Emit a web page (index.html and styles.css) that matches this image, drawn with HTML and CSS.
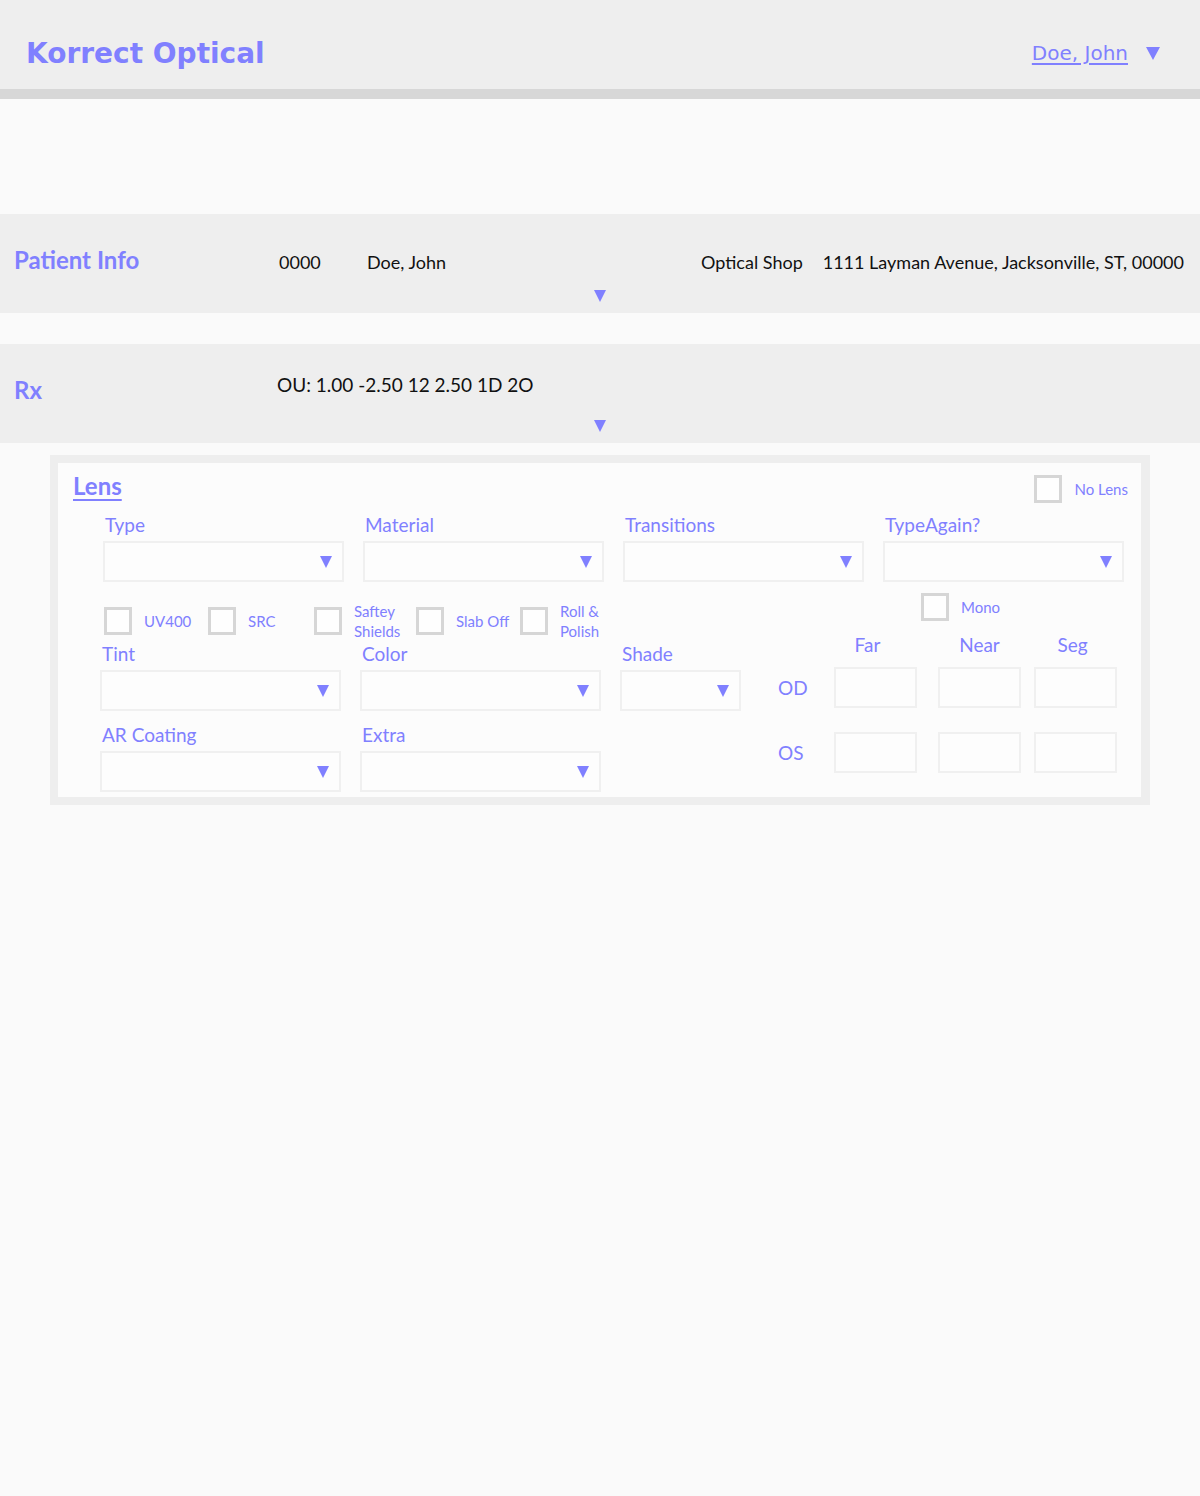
FILE: index.html
```html
<!DOCTYPE html>
<html>
<head>
<meta charset="utf-8">
<title>Korrect Optical</title>
<link rel="stylesheet" href="styles.css">
</head>
<body>
<header class="topbar">
  <h1 class="brand">Korrect Optical</h1>
  <div class="user"><a href="#" class="user-link">Doe, John</a><span class="tri tri-lg"></span></div>
</header>
<div class="spacer"></div>
<section class="band band-patient">
  <div class="band-row">
    <h2 class="band-title">Patient Info</h2>
    <span class="pid">0000</span>
    <span class="pname">Doe, John</span>
    <span class="shop">Optical Shop</span>
    <span class="addr">1111 Layman Avenue, Jacksonville, ST, 00000</span>
  </div>
  <div class="band-toggle"><span class="tri"></span></div>
</section>
<section class="band band-rx">
  <div class="band-row">
    <h2 class="band-title rx-title">Rx</h2>
    <span class="rx-val">OU: 1.00 -2.50 12 2.50 1D 2O</span>
  </div>
  <div class="band-toggle"><span class="tri"></span></div>
</section>
<div class="lens-box">
  <div class="lens-inner">
    <div class="lens-head">
      <a href="#" class="lens-title">Lens</a>
      <label class="chk chk-nolens"><span class="box"></span><span class="chk-label">No Lens</span></label>
    </div>
    <div class="row4">
      <div class="field"><div class="flabel">Type</div><div class="select"><span class="tri"></span></div></div>
      <div class="field"><div class="flabel">Material</div><div class="select"><span class="tri"></span></div></div>
      <div class="field"><div class="flabel">Transitions</div><div class="select"><span class="tri"></span></div></div>
      <div class="field"><div class="flabel">TypeAgain?</div><div class="select"><span class="tri"></span></div></div>
    </div>
    <div class="lower">
      <div class="lower-left">
        <div class="chk-row">
          <label class="chk"><span class="box"></span><span class="chk-label w-uv">UV400</span></label>
          <label class="chk"><span class="box"></span><span class="chk-label w-src">SRC</span></label>
          <label class="chk"><span class="box"></span><span class="chk-label two w-saf">Saftey<br>Shields</span></label>
          <label class="chk"><span class="box"></span><span class="chk-label w-slab">Slab Off</span></label>
          <label class="chk"><span class="box"></span><span class="chk-label two">Roll &amp;<br>Polish</span></label>
        </div>
        <div class="row3">
          <div class="field"><div class="flabel">Tint</div><div class="select"><span class="tri"></span></div></div>
          <div class="field f-color"><div class="flabel">Color</div><div class="select"><span class="tri"></span></div></div>
          <div class="field f-shade"><div class="flabel">Shade</div><div class="select select-sm"><span class="tri"></span></div></div>
        </div>
        <div class="row2">
          <div class="field"><div class="flabel">AR Coating</div><div class="select"><span class="tri"></span></div></div>
          <div class="field"><div class="flabel">Extra</div><div class="select"><span class="tri"></span></div></div>
        </div>
      </div>
      <div class="lower-right">
        <label class="chk chk-mono"><span class="box"></span><span class="chk-label">Mono</span></label>
        <div class="eye-grid">
          <span></span><span class="colh colh-far">Far</span><span class="colh">Near</span><span class="colh colh-seg">Seg</span>
          <span class="eye">OD</span><span class="inp"></span><span class="inp"></span><span class="inp inp-last"></span>
          <span class="eye os">OS</span><span class="inp os"></span><span class="inp os"></span><span class="inp os inp-last"></span>
        </div>
      </div>
    </div>
  </div>
</div>
</body>
</html>
```

FILE: styles.css
```css
* { box-sizing: border-box; }
html, body { margin: 0; padding: 0; }
body {
  background: #fafafa;
  font-family: Lato, "Open Sans", sans-serif;
  color: #8080ff;
  width: 1200px;
  height: 1496px;
}
a { color: #8080ff; }

.tri {
  display: inline-block;
  width: 0; height: 0;
  border-left: 6px solid transparent;
  border-right: 6px solid transparent;
  border-top: 12px solid #8080ff;
}
.tri-lg {
  border-left-width: 7px;
  border-right-width: 7px;
  border-top-width: 13px;
}

.topbar {
  height: 99px;
  background: #eeeeee;
  border-bottom: 10px solid #d7d7d7;
  display: flex;
  align-items: center;
  justify-content: space-between;
  padding: 17px 40px 0 26px;
}
.brand {
  margin: 0;
  font-family: "DejaVu Sans", Verdana, sans-serif;
  font-weight: bold;
  font-size: 28px;
  color: #8080ff;
}
.user { display: flex; align-items: center; gap: 18px; }
.user-link {
  font-family: "DejaVu Sans", Verdana, sans-serif;
  font-size: 20px;
  text-underline-offset: 3px;
}

.spacer { height: 115px; }

.band {
  height: 99px;
  background: #eeeeee;
  display: flex;
  flex-direction: column;
}
.band-rx { margin-top: 31px; }
.band-row {
  display: flex;
  align-items: center;
  height: 76px;
  padding: 0 16px 0 14px;
  color: #111;
  font-size: 18px;
}
.band-patient .band-row { padding-top: 20px; }
.band-title {
  margin: 0;
  font-size: 24px;
  font-weight: bold;
  color: #8080ff;
  width: 265px;
  position: relative;
  top: -3px;
}
.rx-title { top: 7px; width: 263px; }
.pid { width: 88px; }
.pname { flex: 1; }
.shop { margin-right: 20px; }
.rx-val { position: relative; top: 2px; font-size: 19px; }
.band-toggle {
  display: flex;
  justify-content: center;
}

.lens-box {
  margin: 12px 50px 0;
  border: 8px solid #eeeeee;
  border-right-width: 9px;
  background: #fcfcfc;
}
.lens-inner {
  height: 334px;
  padding: 8px 13px 0 15px;
}
.lens-head {
  display: flex;
  justify-content: space-between;
  align-items: flex-start;
  height: 42px;
}
.lens-title {
  font-size: 24px;
  font-weight: bold;
  text-underline-offset: 4px;
  margin-top: 0;
}
.chk {
  display: flex;
  align-items: center;
  gap: 12px;
}
.box {
  display: inline-block;
  width: 28px; height: 28px;
  border: 3px solid #d6d6d6;
  background: #fefefe;
  flex: none;
}
.chk-label { font-size: 15px; line-height: 20px; color: #8080ff; }
.chk-nolens { margin-top: 4px; }

.row4 {
  display: flex;
  gap: 19px;
  padding-left: 30px;
}
.field { width: 241px; }
.flabel {
  font-size: 19px;
  line-height: 24px;
  padding-left: 2px;
  margin-bottom: 4px;
}
.select {
  height: 41px;
  border: 2px solid #f0f0f0;
  background: #fdfdfd;
  display: flex;
  align-items: center;
  justify-content: flex-end;
  padding-right: 10px;
}
.select-sm { width: 121px; }

.lower {
  display: flex;
  padding-left: 27px;
}
.lower-left { width: 650px; }
.chk-row {
  display: flex;
  align-items: center;
  height: 60px;
  padding-top: 18px;
  padding-left: 4px;
}
.w-uv { width: 64px; }
.w-src { width: 66px; }
.w-saf { width: 62px; }
.w-slab { width: 64px; }
.two { line-height: 20px; font-size: 15px; }

.row3 {
  display: flex;
  gap: 19px;
}
.f-shade { width: 121px; }
.row2 {
  display: flex;
  gap: 19px;
  margin-top: 12px;
}

.lower-right {
  padding-left: 28px;
}
.chk-mono { margin-left: 143px; margin-top: 11px; }
.eye-grid {
  display: grid;
  grid-template-columns: 35px 83px 83px 83px;
  column-gap: 21px;
  margin-top: 12px;
  align-items: center;
}
.eye-grid .colh {
  text-align: center;
  font-size: 19px;
  line-height: 24px;
  height: 34px;
  align-self: start;
}
.colh-far { padding-right: 16px; }
.colh-seg { padding-right: 14px; }
.eye { font-size: 19px; }
.inp {
  width: 83px;
  height: 41px;
  border: 2px solid #f0f0f0;
  background: #fdfdfd;
}
.inp-last, .colh-seg { margin-left: -8px; }
.os { margin-top: 24px; }
.eye.os { margin-top: 24px; line-height: 41px; }
```
